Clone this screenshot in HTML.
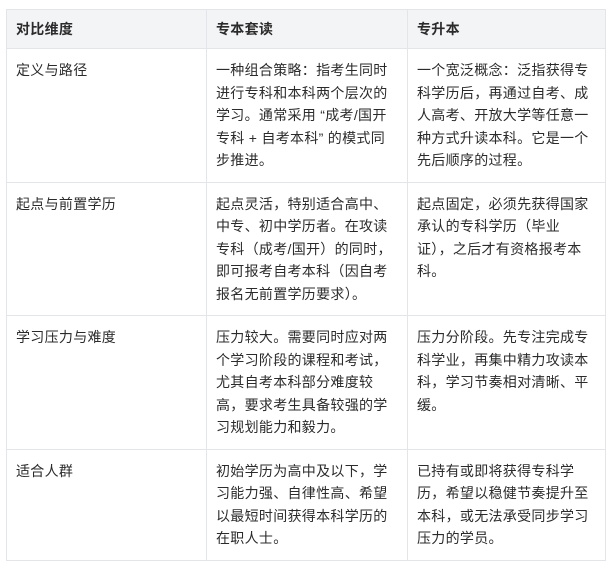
<!DOCTYPE html>
<html><head><meta charset="utf-8"><style>
body{margin:0;background:#fff;font-family:"Liberation Sans","Noto Sans CJK SC",sans-serif;font-size:14px;color:#2b2b2b}
table{position:absolute;left:6px;top:9px;width:599px;border-collapse:collapse;table-layout:fixed}
td,th{border:1px solid #e3e5e8;padding:10px 9px;vertical-align:top;line-height:22.5px;text-align:left;letter-spacing:0.3px;white-space:nowrap;overflow:hidden}
th{background:#f3f4f6;font-weight:bold;padding:8px 9px;line-height:22px}
</style></head><body>
<table>
<colgroup><col style="width:200px"><col style="width:201px"><col style="width:198px"></colgroup>
<tr><th>对比维度</th><th>专本套读</th><th>专升本</th></tr>
<tr><td>定义与路径</td><td>一种组合策略：指考生同时<br>进行专科和本科两个层次的<br>学习。通常采用 “成考/国开<br>专科 + 自考本科” 的模式同<br>步推进。</td><td>一个宽泛概念：泛指获得专<br>科学历后，再通过自考、成<br>人高考、开放大学等任意一<br>种方式升读本科。它是一个<br>先后顺序的过程。</td></tr>
<tr><td>起点与前置学历</td><td>起点灵活，特别适合高中、<br>中专、初中学历者。在攻读<br>专科（成考/国开）的同时，<br>即可报考自考本科（因自考<br>报名无前置学历要求）。</td><td>起点固定，必须先获得国家<br>承认的专科学历（毕业<br>证），之后才有资格报考本<br>科。</td></tr>
<tr><td>学习压力与难度</td><td>压力较大。需要同时应对两<br>个学习阶段的课程和考试，<br>尤其自考本科部分难度较<br>高，要求考生具备较强的学<br>习规划能力和毅力。</td><td>压力分阶段。先专注完成专<br>科学业，再集中精力攻读本<br>科，学习节奏相对清晰、平<br>缓。</td></tr>
<tr><td>适合人群</td><td>初始学历为高中及以下，学<br>习能力强、自律性高、希望<br>以最短时间获得本科学历的<br>在职人士。</td><td>已持有或即将获得专科学<br>历，希望以稳健节奏提升至<br>本科，或无法承受同步学习<br>压力的学员。</td></tr>
</table>
</body></html>
